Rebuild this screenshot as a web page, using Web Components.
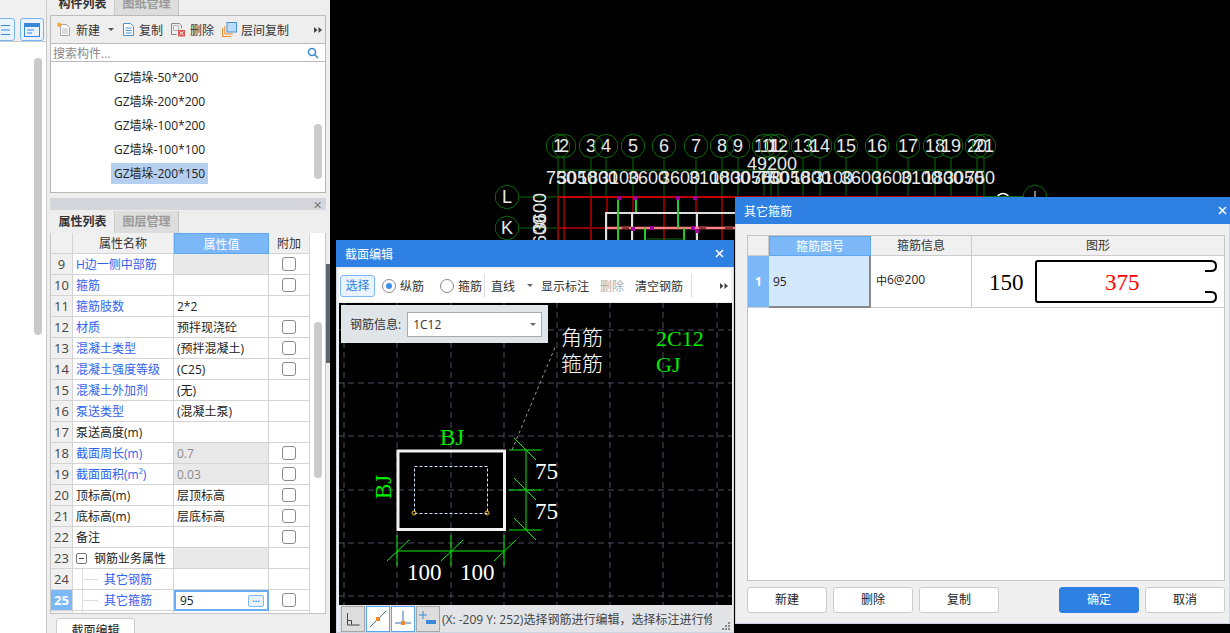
<!DOCTYPE html>
<html lang="zh">
<head>
<meta charset="utf-8">
<title>截面编辑</title>
<style>
    html, body { margin: 0; height: 633px; overflow: hidden; background: #000; }
    body { font: 12px "Open Sans", "Noto Sans CJK SC", sans-serif; color: #222; }
    #root { display: flex; height: 633px; position: relative; }
</style>
</head>
<body>
<div id="root">
    <side-rail></side-rail>
    <part-panel></part-panel>
    <cad-view></cad-view>
    <section-dialog></section-dialog>
    <stirrup-dialog></stirrup-dialog>
</div>

<script>
class SideRail extends HTMLElement {
    connectedCallback() {
        this.attachShadow({ mode: 'open' });
        this.shadowRoot.innerHTML = `
            <style>
                :host { display: block; flex: 0 0 46px; height: 633px; background: #fff; border-right: 1px solid #c9c9c9; box-sizing: content-box; overflow: hidden; }
                .top { height: 42px; box-sizing: border-box; background: #f0f0f0; border-bottom: 1px solid #c8c8c8; padding: 18px 2px 0 0; display: flex; justify-content: flex-end; gap: 5px; }
                .btn { flex: 0 0 22px; height: 21px; border: 1px solid #74b4f5; border-radius: 3px; background: #eaf4ff; display: flex; align-items: center; justify-content: center; }
                .btn.cut { margin-left: -8px; }
                .track { padding: 16px 4px 0 0; display: flex; justify-content: flex-end; }
                .thumb { width: 8px; height: 277px; background: #c9c9c9; border-radius: 4px; }
            </style>
            <div class="top">
                <div class="btn cut"><svg width="16" height="14" viewBox="0 0 16 14" fill="none" stroke="#3b87d8"><path d="M1 2.5h3M6 2.5h9M1 7h3M6 7h9M1 11.5h3M6 11.5h9"/></svg></div>
                <div class="btn"><svg width="16" height="14" viewBox="0 0 16 14" fill="none"><rect x=".5" y=".5" width="15" height="13" stroke="#3b87d8"/><rect x="1" y="1" width="14" height="3" fill="#3b87d8"/><path d="M3 7h7M3 10h5" stroke="#3b87d8"/></svg></div>
            </div>
            <div class="track"><div class="thumb"></div></div>`;
    }
}

class PartPanel extends HTMLElement {
    connectedCallback() {
        this.attachShadow({ mode: 'open' });
        this.shadowRoot.innerHTML = `
            <style>
                :host { display: flex; flex-direction: column; flex: 0 0 283px; width: 283px; height: 633px; box-sizing: border-box; padding-left: 3px; background: #eee; overflow: hidden; position: relative; }
                .tabs { display: flex; height: 22px; margin-top: -7px; flex: none; box-sizing: border-box; margin-right: 4px; padding-left: 1px; }
                .tabs.props { margin-top: 1px; height: 22px; border-bottom: 0; }
                .tab { width: 64px; box-sizing: border-box; text-align: center; line-height: 21px; font-weight: 600; color: #333; border-right: 1px solid #ccc; }
                .tab.off { background: #ddd; color: #999; font-weight: 600; border-right: 1px solid #c4c4c4; }
                .tools { height: 28px; flex: none; margin-right: 4px; box-sizing: border-box; border: 1px solid #bbb; border-width: 1px 1px 0; display: flex; align-items: center; padding-left: 6px; color: #333; white-space: nowrap; }
                .tools span { display: flex; align-items: center; gap: 4px; margin-right: 8px; }
                .tools .more { margin: 0 0 0 auto; padding-right: 3px; }
                .caret { width: 0; height: 0; border: 3px solid transparent; border-top-color: #555; border-bottom: 0; margin-left: 4px; }
                .search { height: 19px; flex: none; margin-right: 4px; box-sizing: border-box; background: #fff; border: 1px solid #bbb; display: flex; align-items: center; justify-content: space-between; padding: 0 6px 0 2px; color: #888; }
                .list { height: 131px; flex: none; margin-right: 4px; box-sizing: border-box; background: #fff; border: 1px solid #b5b5b5; border-top: 0; padding: 5px 0 0 60px; position: relative; color: #222; }
                .list div { height: 21px; line-height: 21px; margin-bottom: 3px; width: max-content; padding: 0 3px; }
                .list .on { background: #b5cff0; }
                .list i { position: absolute; left: 263px; top: 62px; width: 8px; height: 55px; background: #cbcbcb; border-radius: 4px; }
                .bar { height: 12px; flex: none; margin: 5px 4px 0 0; background: #d4d6db; display: flex; justify-content: flex-end; align-items: center; padding-right: 4px; font-size: 11px; color: #777; line-height: 1; }
                .grip { position: absolute; right: 0; top: 264px; width: 4px; height: 99px; background: #5f6672; }
                .bottom { flex: none; height: 19px; padding-left: 6px; }
                .bottom div { width: 79px; height: 30px; box-sizing: border-box; background: #fff; border: 1px solid #ccc; border-radius: 3px 3px 0 0; text-align: center; line-height: 24px; margin-top: 4px; }
            </style>
            <div class="tabs"><div class="tab">构件列表</div><div class="tab off">图纸管理</div></div>
            <div class="tools">
                <span><svg width="15" height="15" viewBox="0 0 15 15" fill="none"><path d="M3.5 2.5h6l3 3v8h-9z" fill="#fdfdfd" stroke="#a7a7a7"/><path d="M5 7h6M5 9h6M5 11h6" stroke="#bbb"/><path d="M2 0l1 1.5L5 1 3.8 2.7 5 4.3 3 4 2 5.5 1 4l-1 .3L.8 2.7 0 1l1 .5z" fill="#f3a530"/></svg>新建<b class="caret"></b></span>
                <span><svg width="13" height="15" viewBox="0 0 13 15" fill="#fff" stroke="#4a90d0"><path d="M1.5 1.5h7l3 3v9h-10z"/><path d="M3.5 6h6M3.5 8.500h6M3.5 11h6"/></svg>复制</span>
                <span><svg width="15" height="15" viewBox="0 0 15 15" fill="none"><path d="M.5 1.500h8l2 2v3M.5 1.500v11h5" stroke="#8a8a8a"/><path d="M2.500 3.500h5v5h-5z" stroke="#b5b5b5"/><rect x="7" y="8" width="7" height="6.500" fill="#d9534f"/><path d="M8.500 9.500l4 3.500m0-3.500l-4 3.500" stroke="#fff"/></svg>删除</span>
                <span><svg width="15" height="15" viewBox="0 0 15 15" fill="none"><path d="M.5 6v8.500H9M2.800 4v8h8" stroke="#ef8a2c"/><rect x="5" y=".5" width="9.500" height="9.500" fill="#bcdcfb" stroke="#4a90d0"/></svg>层间复制</span>
                <span class="more"><svg width="8" height="8" viewBox="0 0 8 8" fill="#444"><path d="M0 1l3.500 3L0 7zM4.500 1L8 4 4.500 7z"/></svg></span>
            </div>
            <div class="search">搜索构件...<svg width="12" height="12" viewBox="0 0 12 12" fill="none" stroke="#3a8ed0" stroke-width="1.600"><circle cx="5" cy="5" r="3.500"/><path d="M7.500 7.500L11 11"/></svg></div>
            <div class="list">
                <div>GZ墙垛-50*200</div>
                <div>GZ墙垛-200*200</div>
                <div>GZ墙垛-100*200</div>
                <div>GZ墙垛-100*100</div>
                <div class="on">GZ墙垛-200*150</div>
                <i></i>
            </div>
            <div class="bar">✕</div>
            <div class="tabs props"><div class="tab">属性列表</div><div class="tab off">图层管理</div></div>
            <prop-table></prop-table>
            <div class="bottom"><div>截面编辑</div></div>
            <div class="grip"></div>`;
    }
}

const PROP_ROWS = [
    { n: 9, name: 'H边一侧中部筋', blue: 1, gray: 1, cb: 1 },
    { n: 10, name: '箍筋', blue: 1, cb: 1 },
    { n: 11, name: '箍筋肢数', blue: 1, val: '2*2' },
    { n: 12, name: '材质', blue: 1, val: '预拌现浇砼', cb: 1 },
    { n: 13, name: '混凝土类型', blue: 1, val: '(预拌混凝土)', cb: 1 },
    { n: 14, name: '混凝土强度等级', blue: 1, val: '(C25)', cb: 1 },
    { n: 15, name: '混凝土外加剂', blue: 1, val: '(无)' },
    { n: 16, name: '泵送类型', blue: 1, val: '(混凝土泵)' },
    { n: 17, name: '泵送高度(m)' },
    { n: 18, name: '截面周长(m)', blue: 1, gray: 1, val: '0.7', cb: 1 },
    { n: 19, name: '截面面积(m²)', blue: 1, gray: 1, val: '0.03', cb: 1 },
    { n: 20, name: '顶标高(m)', val: '层顶标高', cb: 1 },
    { n: 21, name: '底标高(m)', val: '层底标高', cb: 1 },
    { n: 22, name: '备注', cb: 1 },
    { n: 23, name: '钢筋业务属性', group: 1, gray: 1 },
    { n: 24, name: '其它钢筋', blue: 1, child: 1 },
    { n: 25, name: '其它箍筋', blue: 1, child: 1, val: '95', cb: 1, sel: 1 }
];

class PropTable extends HTMLElement {
    connectedCallback() {
        this.attachShadow({ mode: 'open' });
        const rows = PROP_ROWS.map(r => `
            <div class="c num ${r.sel ? 'sel' : ''}">${r.n}</div>
            <div class="c name ${r.blue ? 'blue' : ''} ${r.child ? 'child' : ''}">${r.group ? '<b class="minus"></b>' : ''}${r.name}</div>
            <div class="c val ${r.gray ? 'gray' : ''} ${r.sel ? 'edit' : ''}">${r.val || ''}${r.sel ? '<em>···</em>' : ''}</div>
            <div class="c add">${r.cb ? '<u></u>' : ''}</div>`).join('');
        this.shadowRoot.innerHTML = `
            <style>
                :host { display: block; height: 381px; flex: none; margin-right: 4px; box-sizing: border-box; border: 1px solid #c4c4c4; border-top: 0; background: #fff; position: relative; overflow: hidden; }
                .grid { display: grid; grid-template-columns: 22px 101px 95px 41px; grid-auto-rows: 21px; width: 259px; }
                .c { box-sizing: border-box; border-right: 1px solid #d4d4d4; border-bottom: 1px solid #d4d4d4; display: flex; align-items: center; padding-left: 3px; white-space: nowrap; overflow: hidden; color: #222; }
                .h { background: #f0f0f0; justify-content: center; padding: 0; color: #333; }
                .h.on { background: #7cb8f8; color: #fff; border: 1px solid #5ea6ee; }
                .num { background: #f0f0f0; justify-content: center; padding: 0; color: #444; font-size: 13px; }
                .num.sel { background: #7cb8f8; color: #fff; font-weight: 700; }
                .blue { color: #2f62ee; }
                .child { padding-left: 31px; position: relative; }
                .child::before { content: ''; position: absolute; left: 9px; top: 0; bottom: 0; border-left: 1px solid #ddd; }
                .child::after { content: ''; position: absolute; left: 9px; top: 10px; width: 16px; border-top: 1px solid #ddd; }
                .minus { width: 11px; height: 11px; box-sizing: border-box; border: 1px solid #777; border-radius: 2px; margin-right: 7px; position: relative; flex: none; }
                .minus::after { content: ''; position: absolute; left: 2px; right: 2px; top: 4px; border-top: 1px solid #444; }
                .gray { background: #e9e9e9; color: #888; }
                .edit { border: 2px solid #69aef5; padding-left: 4px; justify-content: space-between; padding-right: 3px; color: #222; }
                .edit em { font-style: normal; width: 16px; height: 12px; box-sizing: border-box; border: 1px solid #7cb8f8; border-radius: 2px; background: #e8f3ff; color: #3b87d8; font-size: 9px; line-height: 9px; text-align: center; font-weight: 700; }
                .add { justify-content: center; padding: 0; }
                .add u { display: block; width: 14px; height: 14px; box-sizing: border-box; border: 1px solid #8a8a8a; border-radius: 3px; background: #fff; }
                .thumb { position: absolute; left: 263px; top: 89px; width: 8px; height: 156px; background: #cbcbcb; border-radius: 4px; }
            </style>
            <div class="grid">
                <div class="c h"></div><div class="c h">属性名称</div><div class="c h on">属性值</div><div class="c h">附加</div>
                ${rows}
                <div class="c num"></div><div class="c child"></div><div class="c"></div><div class="c"></div>
            </div>
            <div class="thumb"></div>`;
    }
}

// main drawing behind the dialogs
class CadView extends HTMLElement {
    connectedCallback() {
        this.attachShadow({ mode: 'open' });
        const axes = [558, 564, 591, 606, 633, 664, 696, 722, 738, 764, 771, 778, 803, 820, 846, 877, 908, 935, 951, 977, 984];
        const dims = [[561, '750'], [577, '3050'], [598, '1800'], [619, '3100'], [648, '3600'], [680, '3600'], [709, '3100'], [730, '1800'], [751, '3050'], [767, '750'], [774, '750'], [790, '3050'], [811, '1800'], [833, '3100'], [861, '3600'], [892, '3600'], [921, '3100'], [943, '1800'], [964, '3050'], [980, '750']];
        const poly = (cx, cy, r) => {
            const p = [];
            for (let i = 0; i < 10; i++) {
                const a = Math.PI * 2 * i / 10 + Math.PI / 10;
                p.push((cx + r * Math.cos(a)).toFixed(1) + ',' + (cy + r * Math.sin(a)).toFixed(1));
            }
            return `<polygon points="${p.join(' ')}" fill="none" stroke="#0a6a0a"/>`;
        };
        let s = '';
        axes.forEach((x, i) => {
            s += poly(x, 146, 12);
            s += `<line x1="${x}" y1="158" x2="${x}" y2="197" stroke="#0a6a0a"/>`;
            s += `<text x="${x}" y="152" class="t" text-anchor="middle">${i + 1}</text>`;
        });
        s += '<line x1="558" y1="170" x2="984" y2="170" stroke="#0a6a0a"/>';
        dims.forEach(d => { s += `<text x="${d[0]}" y="184" class="t" text-anchor="middle">${d[1]}</text>`; });
        s += '<text x="772" y="170" class="t" text-anchor="middle">49200</text>';

        // left and right bubbles
        s += poly(507, 197, 12) + poly(507, 228, 12) + poly(1035, 197, 12);
        s += '<text x="507" y="203" class="t" text-anchor="middle">L</text><text x="507" y="234" class="t" text-anchor="middle">K</text>';
        s += '<line x1="1035" y1="191" x2="1035" y2="197" stroke="#fff"/><circle cx="1003" cy="200" r="6.500" fill="none" stroke="#fff" stroke-width="1.500"/>';
        s += '<path d="M519 197H558M519 228H558M984 196.500H1023" stroke="#0a6a0a"/>';
        s += '<text transform="translate(546 265) rotate(-90)" class="t">03600</text><text transform="translate(546 233) rotate(-90)" class="t">3600</text>';

        // plan grid
        s += '<path d="M558 197H984" stroke="#c00000" stroke-width="2"/><path d="M558 228H606" stroke="#8b0000" stroke-width="2"/>';
        s += '<path d="M558 197V240M591 197V240" stroke="#8b0000" stroke-width="2"/>';
        s += '<path d="M564 197V240M607 197V240M633 197V240M664 197V240M696 197V240M722 197V240" stroke="#f00"/>';
        s += '<path d="M606 240V213H735M632 213V240M697 213V240" stroke="#ddd" stroke-width="2" fill="none"/>';
        s += '<path d="M607 228H735" stroke="#ff8080" stroke-width="2.500"/>';
        s += '<path d="M618 198V240M636 198V212M678 198V228M645 228V240M684 228V240" stroke="#22cc22" stroke-width="2"/>';
        s += '<path d="M647 239H684" stroke="#0a6a0a" stroke-width="1"/>';
        s += '<path d="M622 227.500h7M699 227.500h7M725 227.500h8" stroke="#8b3333" stroke-width="3"/>';
        [[619, 198], [635, 198], [678, 198], [695, 198], [633, 229], [652, 228], [693, 228], [697, 231]].forEach(p => {
            s += `<rect x="${p[0] - 2}" y="${p[1] - 2}" width="4" height="4" fill="#a000a0"/>`;
        });

        this.shadowRoot.innerHTML = `
            <style>
                :host { display: block; flex: 1; height: 633px; background: #000; overflow: hidden; }
                svg { display: block; margin-left: -330px; }
                .t { font: 18px "Liberation Sans", sans-serif; fill: #e8e8e8; }
            </style>
            <svg width="1230" height="633" viewBox="0 0 1230 633">${s}</svg>`;
    }
}

class CadWindow extends HTMLElement {
    connectedCallback() {
        this.attachShadow({ mode: 'open' });
        this.shadowRoot.innerHTML = `
            <style>
                :host { display: flex; flex-direction: column; box-sizing: border-box; height: 100%; border: 1px solid #cdd4e2; border-width: 0 1px 1px; background: #efefef; }
                .title { flex: none; height: 27px; background: #2e80e2; color: #fff; display: flex; align-items: center; justify-content: space-between; padding: 0 var(--close-pad, 8px) 0 9px; margin: 0 -1px; }
                .body { flex: 1; min-height: 0; display: flex; flex-direction: column; }
            </style>
            <div class="title"><span>${this.getAttribute('caption')}</span><svg width="9" height="9" viewBox="0 0 9 9" stroke="#fff" stroke-width="1.500"><path d="M1 1l7 7M8 1L1 8"/></svg></div>
            <div class="body"><slot></slot></div>`;
    }
}

class SectionDialog extends HTMLElement {
    connectedCallback() {
        this.attachShadow({ mode: 'open' });
        const gx = [344, 397, 451, 504, 557, 610, 663, 717];
        const gy = [330, 383, 436, 490, 543, 596];
        let grid = '';
        gx.forEach(x => { grid += `M${x} 302V606`; });
        gy.forEach(y => { grid += `M338 ${y}H732`; });
        const tickR = y => `M509 ${y}H541M514 ${y - 12}L536 ${y + 10}`;
        const tickB = x => `M${x} 535V566M${x - 10} 561L${x + 12} 540`;
        this.shadowRoot.innerHTML = `
            <style>
                :host { display: block; position: absolute; left: 336px; top: 240px; width: 398px; height: 393px; --close-pad: 10px; }
                .tools { flex: none; height: 33px; margin: 2px 2px 1px; background: #fff; display: flex; align-items: center; color: #333; box-sizing: border-box; padding-left: 1px; white-space: nowrap; }
                .tools > span { flex: none; }
                .pick { flex: none; width: 35px; height: 22px; box-sizing: border-box; border: 1px solid #7cb8f8; border-radius: 3px; background: #e8f3ff; color: #2f7fe0; text-align: center; line-height: 20px; }
                .sep { flex: none; width: 1px; height: 24px; background: #ddd; }
                .radio { flex: none; width: 14px; height: 14px; box-sizing: border-box; border: 1px solid #888; border-radius: 50%; display: flex; align-items: center; justify-content: center; margin-right: 4px; background: #fff; }
                .radio.on::after { content: ''; width: 6px; height: 6px; border-radius: 50%; background: #3b8ff0; }
                .caret { flex: none; width: 0; height: 0; border: 3px solid transparent; border-top-color: #666; border-bottom: 0; }
                .canvas { flex: 1; min-height: 0; position: relative; margin: 0 1px 0 2px; background: #000; overflow: hidden; }
                svg.draw { display: block; margin: -303px 0 0 -339px; }
                .draw text { font-family: "Liberation Serif", "Noto Sans CJK SC", serif; font-size: 23px; fill: #fff; }
                .draw text.g { fill: #00ee00; }
                .info { position: absolute; left: 2px; top: 2px; width: 207px; height: 38px; box-sizing: border-box; background: #dfe5e8; display: flex; align-items: center; padding-left: 9px; gap: 6px; color: #333; }
                .info div { width: 135px; height: 25px; box-sizing: border-box; border: 1px solid #aaa; background: #fff; display: flex; justify-content: space-between; align-items: center; padding: 0 5px; }
                .status { flex: none; height: 27px; background: #e2e4e8; display: flex; align-items: center; padding-left: 2px; color: #444; margin: 0 1px 0 2px; position: relative; overflow: hidden; white-space: nowrap; }
                .status b { flex: none; width: 24px; height: 26px; box-sizing: border-box; border: 1px solid #a5a5a5; background: #ddd; display: flex; align-items: center; justify-content: center; margin-right: 1px; }
                .status b.on { background: #fff; border-color: #58a5f5; }
                .msg { width: 270px; overflow: hidden; padding-left: 1px; }
                .dots { position: absolute; right: 1px; bottom: 1px; }
            </style>
            <cad-window caption="截面编辑">
                <div class="tools">
                    <div class="pick">选择</div>
                    <span style="width:7px"></span><b class="radio on"></b><span>纵筋</span>
                    <span style="width:16px"></span><b class="radio"></b><span>箍筋</span>
                    <span style="width:2px"></span><i class="sep"></i>
                    <span style="width:6px"></span><span style="width:36px">直线</span><b class="caret"></b>
                    <span style="width:8px"></span><span>显示标注</span>
                    <span style="width:11px"></span><span style="color:#aaa">删除</span>
                    <span style="width:11px"></span><span>清空钢筋</span>
                    <span style="width:8px"></span><i class="sep"></i>
                    <span style="width:28px"></span><svg width="8" height="8" viewBox="0 0 8 8" fill="#444"><path d="M0 1l3.500 3L0 7zM4.500 1L8 4 4.500 7z"/></svg>
                </div>
                <div class="canvas">
                    <svg class="draw" width="1230" height="633" viewBox="0 0 1230 633" fill="none">
                        <path d="${grid}" stroke="#4a5060" stroke-dasharray="6 4"/>
                        <path d="M512 450L556 345" stroke="#999" stroke-dasharray="3 3"/>
                        <text x="561" y="345" style="font-size:21px;font-weight:300">角筋</text>
                        <text x="561" y="371" style="font-size:21px;font-weight:300">箍筋</text>
                        <text class="g" x="656" y="346" style="font-size:22px">2C12</text>
                        <text class="g" x="656" y="372" style="font-size:22px">GJ</text>
                        <text class="g" x="440" y="445">BJ</text>
                        <text class="g" transform="translate(391 499) rotate(-90)">BJ</text>
                        <rect x="398" y="451" width="106.500" height="78.500" stroke="#f2f2f2" stroke-width="3"/>
                        <rect x="414.500" y="466.500" width="73" height="47" stroke="#cfe2ff" stroke-dasharray="3 2"/>
                        <circle cx="414" cy="513" r="2" stroke="#f0c020"/>
                        <circle cx="487" cy="513" r="2" stroke="#f0c020"/>
                        <path d="${tickR(450)}${tickR(490)}${tickR(530)}M526 450V530${tickB(397)}${tickB(451)}${tickB(504)}M397 551H504" stroke="#00f000"/>
                        <text x="535" y="479">75</text>
                        <text x="535" y="519">75</text>
                        <text x="407" y="580">100</text>
                        <text x="460" y="580">100</text>
                    </svg>
                    <div class="info">钢筋信息:<div>1C12<b class="caret"></b></div></div>
                </div>
                <div class="status">
                    <b><svg width="14" height="14" viewBox="0 0 14 14" fill="none" stroke="#444"><path d="M1.500 1v12h12M1.500 8.500h4v4"/></svg></b>
                    <b class="on"><svg width="18" height="18" viewBox="0 0 18 18" fill="none"><path d="M1 17L17 1" stroke="#3b6fb0"/><rect x="7" y="7" width="4" height="4" fill="#ef8a2c"/></svg></b>
                    <b class="on"><svg width="18" height="18" viewBox="0 0 18 18" fill="none"><path d="M9 1V13M1 13H17" stroke="#3b6fb0"/><rect x="7" y="11" width="4" height="4" fill="#ef8a2c"/></svg></b>
                    <b><svg width="18" height="18" viewBox="0 0 18 18" fill="none"><path d="M4 1V9M0 5H8" stroke="#3b87d8"/><rect x="7" y="10" width="10" height="4" fill="#3b87d8"/></svg></b>
                    <div class="msg">(X: -209 Y: 252)选择钢筋进行编辑，选择标注进行修改</div>
                    <svg class="dots" width="9" height="9" viewBox="0 0 9 9" fill="#888"><path d="M6 0h2v2H6zM3 3h2v2H3zM6 3h2v2H6zM0 6h2v2H0zM3 6h2v2H3zM6 6h2v2H6z"/></svg>
                </div>
            </cad-window>`;
    }
}

class StirrupDialog extends HTMLElement {
    connectedCallback() {
        this.attachShadow({ mode: 'open' });
        this.shadowRoot.innerHTML = `
            <style>
                :host { display: block; position: absolute; left: 735px; top: 197px; width: 495px; height: 427px; --close-pad: 3px; }
                .table { flex: 1; min-height: 0; margin: 11px 4px 0 11px; background: #fff; border: 1px solid #c4c4c4; display: grid; grid-template-columns: 21px 102px 101px 1fr; grid-template-rows: 20px 52px 1fr; color: #222; }
                .h { background: #f0f0f0; text-align: center; line-height: 19px; border-right: 1px solid #ccc; border-bottom: 1px solid #ccc; color: #333; }
                .h.on { background: #7cb8f8; color: #fff; border: 1px solid #5ea6ee; }
                .no { background: #7cb8f8; color: #fff; font-weight: 700; display: flex; align-items: center; justify-content: center; border-bottom: 1px solid #ccc; }
                .cur { background: #d4e8fc; border-right: 2px solid #888; border-bottom: 2px solid #888; display: flex; align-items: center; padding-left: 4px; }
                .info { display: flex; align-items: center; padding: 0 0 4px 5px; border-right: 1px solid #ccc; border-bottom: 1px solid #ccc; }
                .info small { font-size: 11px; }
                .fig { border-bottom: 1px solid #ccc; overflow: hidden; }
                .fig svg { display: block; margin: -256px 0 0 -972px; }
                .fig text { font: 23px "Liberation Serif", serif; }
                .rest { grid-column: 1 / -1; }
                .btns { flex: none; display: flex; padding: 6px 4px 10px 11px; }
                .btn { flex: none; width: 80px; height: 26px; box-sizing: border-box; margin-right: 6px; border: 1px solid #ccc; border-radius: 3px; background: #fff; text-align: center; line-height: 24px; color: #222; }
                .btn.ok { margin-left: 54px; background: #2e80e2; border-color: #2e80e2; color: #fff; }
                .btn:last-child { margin-right: 0; }
            </style>
            <cad-window caption="其它箍筋">
                <div class="table">
                    <div class="h"></div><div class="h on">箍筋图号</div><div class="h">箍筋信息</div><div class="h" style="border-right:0">图形</div>
                    <div class="no">1</div><div class="cur">95</div><div class="info"><small>中</small>6@200</div>
                    <div class="fig"><svg width="1230" height="633" viewBox="0 0 1230 633" fill="none">
                        <text x="989" y="290" fill="#000">150</text>
                        <text x="1105" y="290" fill="#f00">375</text>
                        <path d="M1205 271H1211Q1216 271 1216 266Q1216 261 1211 261H1038Q1036 261 1036 263V300Q1036 302 1038 302H1211Q1216 302 1216 297Q1216 292 1211 292H1205" stroke="#000" stroke-width="2"/>
                    </svg></div>
                    <div class="rest"></div>
                </div>
                <div class="btns">
                    <div class="btn">新建</div><div class="btn">删除</div><div class="btn">复制</div>
                    <div class="btn ok">确定</div><div class="btn">取消</div>
                </div>
            </cad-window>`;
    }
}

customElements.define('side-rail', SideRail);
customElements.define('part-panel', PartPanel);
customElements.define('prop-table', PropTable);
customElements.define('cad-view', CadView);
customElements.define('cad-window', CadWindow);
customElements.define('section-dialog', SectionDialog);
customElements.define('stirrup-dialog', StirrupDialog);
</script>
</body>
</html>
